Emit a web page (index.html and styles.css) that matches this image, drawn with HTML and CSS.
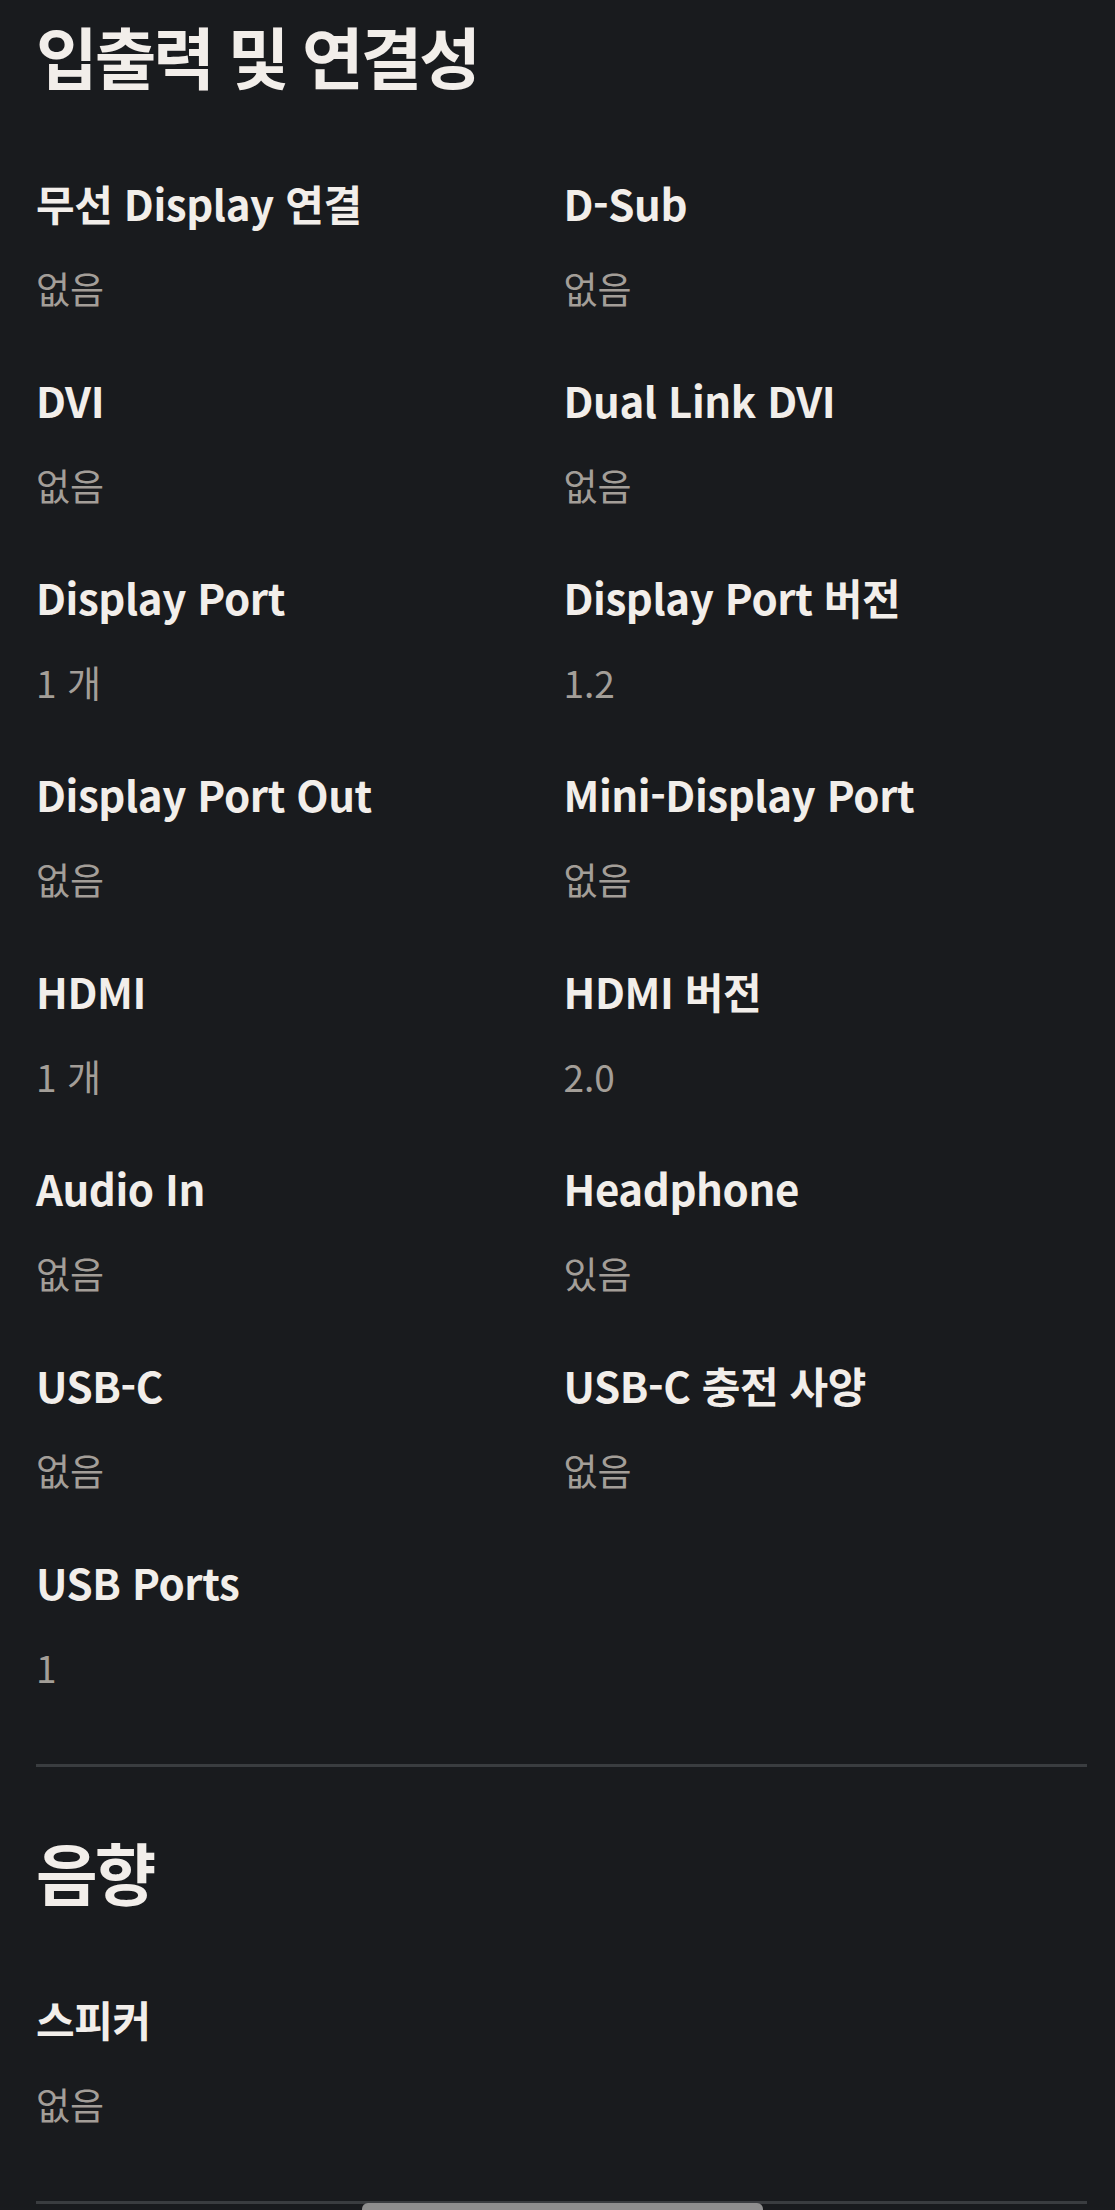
FILE: index.html
```html
<!DOCTYPE html>
<html lang="ko">
<head>
  <meta charset="UTF-8">
  <meta name="viewport" content="width=device-width, initial-scale=1.0">
  <link rel="stylesheet" href="styles.css">
  <title>사양</title>
</head>
<body>

<div class="specs">
  <section class="spec-section">
    <h2 class="section-title">입출력 및 연결성</h2>
    <dl class="spec-grid">
      <div class="spec-item"><dt>무선 Display 연결</dt><dd>없음</dd></div>
      <div class="spec-item"><dt>D-Sub</dt><dd>없음</dd></div>
      <div class="spec-item"><dt>DVI</dt><dd>없음</dd></div>
      <div class="spec-item"><dt>Dual Link DVI</dt><dd>없음</dd></div>
      <div class="spec-item"><dt>Display Port</dt><dd>1 개</dd></div>
      <div class="spec-item"><dt>Display Port 버전</dt><dd>1.2</dd></div>
      <div class="spec-item"><dt>Display Port Out</dt><dd>없음</dd></div>
      <div class="spec-item"><dt>Mini-Display Port</dt><dd>없음</dd></div>
      <div class="spec-item"><dt>HDMI</dt><dd>1 개</dd></div>
      <div class="spec-item"><dt>HDMI 버전</dt><dd>2.0</dd></div>
      <div class="spec-item"><dt>Audio In</dt><dd>없음</dd></div>
      <div class="spec-item"><dt>Headphone</dt><dd>있음</dd></div>
      <div class="spec-item"><dt>USB-C</dt><dd>없음</dd></div>
      <div class="spec-item"><dt>USB-C 충전 사양</dt><dd>없음</dd></div>
      <div class="spec-item"><dt>USB Ports</dt><dd>1</dd></div>
    </dl>
  </section>

  <section class="spec-section">
    <h2 class="section-title">음향</h2>
    <dl class="spec-grid">
      <div class="spec-item"><dt>스피커</dt><dd>없음</dd></div>
    </dl>
  </section>
</div>

<div class="scroll-thumb"></div>

</body>
</html>
```

FILE: styles.css
```css
body {
  margin: 0;
  background-color: #191b1e;
  font-family: "Noto Sans CJK KR", "Noto Sans", sans-serif;
  color: #f2eeea;
  overflow: hidden;
}

.specs {
  padding: 15px 28px 0 36px;
}

.spec-section {
  border-bottom: 3px solid #3a3d40;
  padding-bottom: 73px;
  margin-bottom: 64px;
}

.section-title {
  margin: 0 0 84px;
  font-size: 67px;
  line-height: 80px;
  font-weight: 700;
  letter-spacing: -3px;
}

.spec-grid {
  display: grid;
  grid-template-columns: 1fr 1fr;
  column-gap: 4px;
  row-gap: 64px;
  margin: 0;
}

.spec-item dt {
  font-size: 42px;
  line-height: 48px;
  font-weight: 700;
  letter-spacing: -0.4px;
}

.spec-item dd {
  margin: 37px 0 0;
  font-size: 37px;
  line-height: 48px;
  color: #a39e98;
}

.scroll-thumb {
  position: fixed;
  left: 362px;
  bottom: -6px;
  width: 401px;
  height: 13px;
  border-radius: 6px;
  background-color: #8e8e8e;
}
```
